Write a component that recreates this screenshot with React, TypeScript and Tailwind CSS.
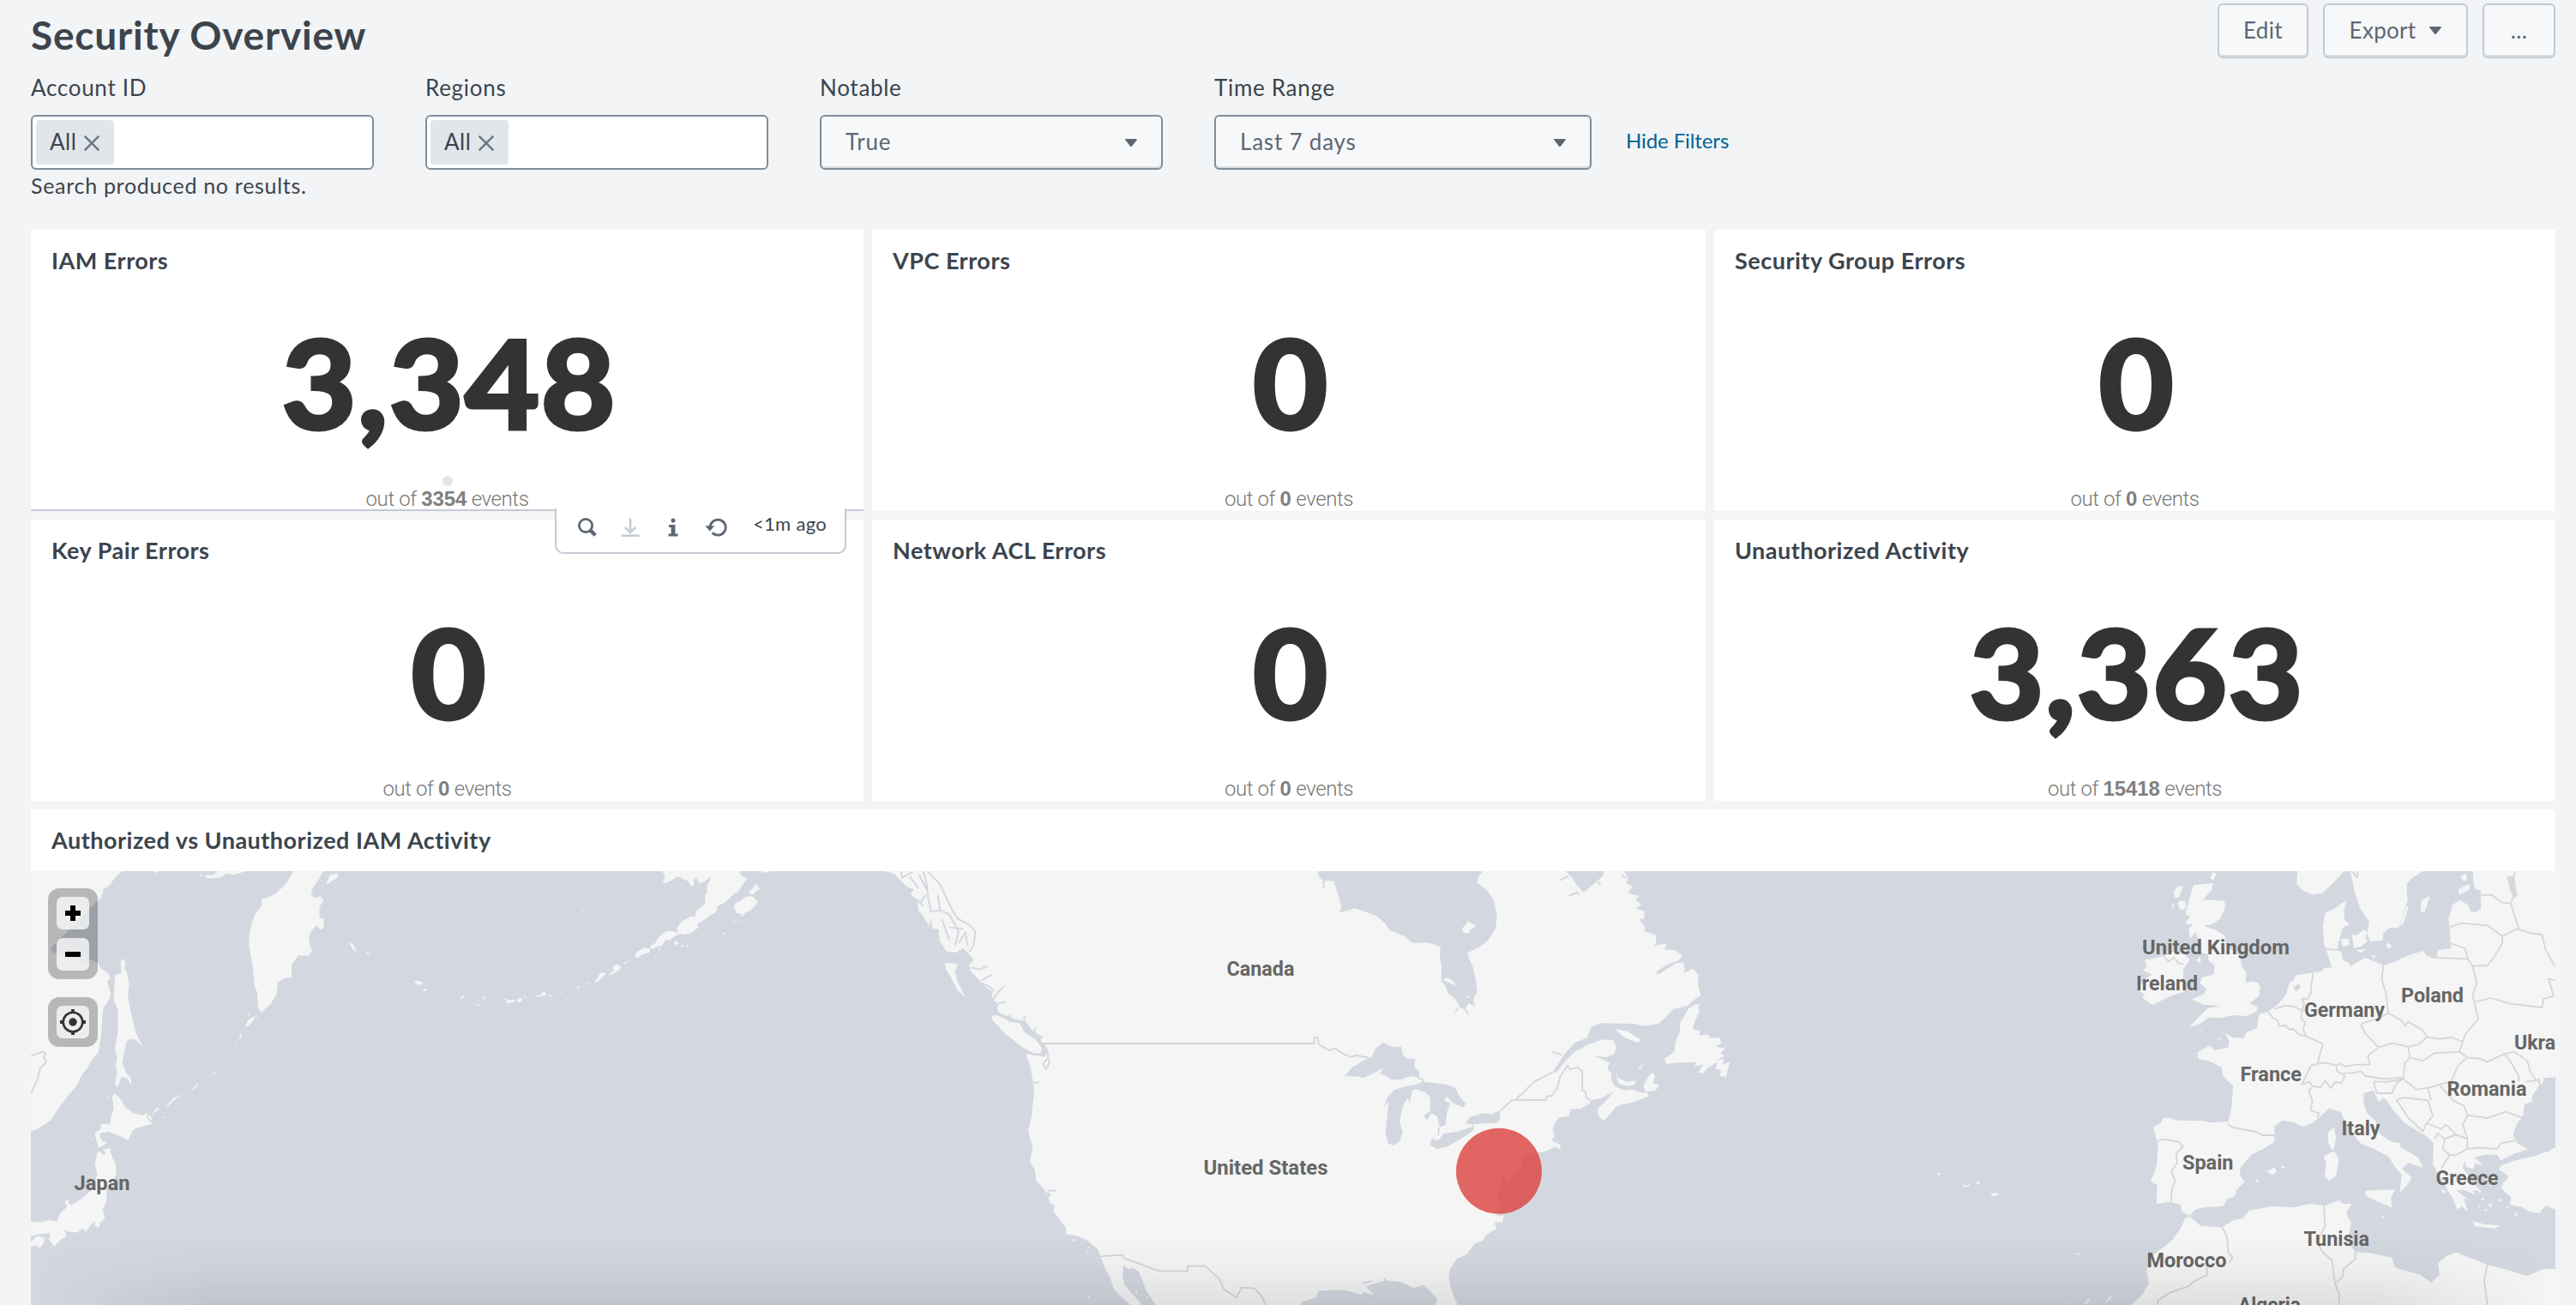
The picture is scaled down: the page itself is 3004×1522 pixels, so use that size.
import type { ReactNode } from "react";

const SEA = "#d3d8e0";
const LAND = "#f5f5f5";
const BORDER = "#d6d6d6";

function Caret() {
  return (
    <svg className="h-[9px] w-[14px] shrink-0" viewBox="0 0 14 9" fill="currentColor">
      <path d="M1 0H13Q14.5 0 13.5 1.5L8 8.4Q7 9.4 6 8.4L.5 1.5Q-.5 0 1 0Z" />
    </svg>
  );
}

function HeaderButton({ className, children }: { className: string; children: ReactNode }) {
  return (
    <button
      className={`flex h-16 items-center justify-center rounded-md border-2 border-[#c3cbd4] bg-[#f7f8fa] pb-0.5 text-[26px] tracking-[0.3px] text-[#5c6773] shadow-[inset_0_-2px_0_#dadee1] ${className}`}
    >
      {children}
    </button>
  );
}

function Field({ label, className, children }: { label: string; className: string; children: ReactNode }) {
  return (
    <div className={className}>
      <label className="block h-[50px] text-[26px] leading-9 tracking-[0.7px]">{label}</label>
      {children}
    </div>
  );
}

function MultiSelect() {
  return (
    <div className="flex h-16 items-center rounded-md border-2 border-[#818d99] bg-white p-1">
      <div className="flex h-[52px] w-[91px] items-center rounded bg-[#e1e6eb] pb-0.5 pl-4 text-[26px] tracking-[0.5px]">
        All
        <svg className="mt-1 ml-[9px] size-[18px]" viewBox="0 0 19 19" stroke="#6b7785" strokeWidth="2.6" strokeLinecap="round">
          <path d="M1.5 1.5L17.5 17.5M17.5 1.5L1.5 17.5" />
        </svg>
      </div>
    </div>
  );
}

function Select({ value }: { value: string }) {
  return (
    <div className="flex h-16 items-center justify-between rounded-md border-2 border-[#818d99] bg-[#f7f8fa] pr-7 pl-7 text-[26px] tracking-[0.8px] text-[#5c6773] shadow-[inset_0_-2px_0_#dadee1]">
      <span className="-mt-0.5">{value}</span>
      <Caret />
    </div>
  );
}

function Panel({ title, value, total, active }: { title: string; value: string; total: string; active?: boolean }) {
  return (
    <section className={`relative flex h-[328px] flex-col bg-white ${active ? "border-b-2 border-[#c3cbd4]" : ""}`}>
      <h3 className="h-[73px] pl-6 text-[27px] leading-[72px] font-bold tracking-[0.5px]">{title}</h3>
      <div className="mt-[34px] scale-x-[1.055] pl-[5px] text-center text-[141px] leading-[144px] font-bold tracking-[2px] text-[#333] [-webkit-text-stroke:5px_#333]">
        {value}
      </div>
      <p className="mt-[46px] text-center font-['Roboto',sans-serif] text-2xl leading-9 font-light tracking-[-0.4px] text-[#777]">
        out of <b className="font-['Liberation_Sans',sans-serif] font-bold tracking-[-0.1px] text-[#808080]">{total}</b> events
      </p>
      {active && (
        <>
          <span className="absolute top-[287px] left-1/2 size-3 -translate-x-1/2 rounded-full bg-[#e1e6eb]" />
          <PanelToolbar />
        </>
      )}
    </section>
  );
}

function PanelToolbar() {
  return (
    <div className="absolute top-[325px] right-5 z-10 flex h-[53px] w-[340px] rounded-b-[10px] border-2 border-t-0 border-[#c3cbd4] bg-white pl-[25px] text-[#5c6773]">
      <svg className="mt-[11px] size-[22px]" viewBox="0 0 22 22" fill="none" stroke="currentColor">
        <circle cx="9" cy="9" r="7.6" strokeWidth="2.8" />
        <path d="M14 14L20.3 20.3" strokeWidth="4.4" />
      </svg>
      <svg className="mt-[11px] ml-7 size-[22px] text-[#c3cbd4]" viewBox="0 0 22 22" fill="none" stroke="currentColor" strokeWidth="2.6">
        <path d="M11 .5V16M4.8 11L11 17L17.2 11M.5 20.7H21.5" />
      </svg>
      <svg className="mt-[11px] ml-[33px] h-[22px] w-3" viewBox="0 0 12 22" fill="currentColor">
        <circle cx="6" cy="3" r="2.5" />
        <path d="M1 8H8.4V18.6H11.5V21.6H.5V18.6H3.6V11H1Z" />
      </svg>
      <svg className="mt-[11px] ml-[31px] h-[22px] w-[26px]" viewBox="0 0 26 22" fill="none" stroke="currentColor">
        <path d="M6.2 11A9 9 0 1 1 8.7 17.3" strokeWidth="2.8" />
        <path d="M.3 9.3L11.3 9.3L5.8 15.6Z" fill="currentColor" stroke="none" />
      </svg>
      <span className="mt-1 ml-[30px] text-[22px] leading-7 whitespace-nowrap tracking-[0.3px] text-[#3c444d]">&lt;1m ago</span>
    </div>
  );
}

type Sheet = { id: string; transform: string; land: string; water?: string; islands?: string; channels?: string; borders?: string };

const SHEETS: Sheet[] = [
  {
    id: "north-west-pacific",
    transform: "translate(0 920) scale(.33333 .38393)",
    land:
      "M108 250L428 250L412 262L400 272L385 292L362 305L355 330L330 350L300 375L270 405L240 430L215 450L180 482L178 492L185 498L215 500L250 515L290 524L320 520L345 530L352 545L378 560L385 575L375 585L380 600L388 625L378 645L362 665L358 690L355 740L345 798L320 825L305 850L285 870L270 900L240 930L205 970L180 1005L150 1022L130 1035L108 1040Z" +
      "M430 515L440 530L436 545L445 560L452 595L447 630L458 680L475 740L502 787L475 762L455 760L443 768L435 800L427 830L440 860L458 880L460 900L445 880L425 875L410 907L402 895L410 860L404 840L410 820L402 790L412 740L413 670L397 640L403 565L425 560L422 525Z" +
      "M400 925L420 940L440 968L465 985L500 992L520 985L530 1000L532 1018L480 1030L465 1038L447 1068L420 1055L380 1042L350 1045L350 1058L360 1070L375 1076L345 1090L335 1060L332 1045L350 1035L355 1018L385 1020L388 1000L398 970L392 935Z" +
      "M350 1102L362 1112L370 1108L362 1095L385 1092L390 1115L405 1140L407 1165L395 1200L372 1215L373 1250L360 1280L367 1305L350 1318L345 1335L330 1325L335 1310L312 1330L300 1345L290 1335L270 1348L240 1345L225 1338L233 1358L212 1370L190 1390L172 1370L175 1350L140 1352L108 1358L108 1315L140 1317L175 1310L200 1315L210 1290L235 1270L226 1255L245 1245L238 1258L250 1265L300 1235L330 1210L340 1170L332 1140L340 1105Z" +
      "M108 1375L130 1358L158 1365L150 1385L138 1395L125 1387L108 1390Z" +
      "M1028 250L1130 250L1115 275L1095 300L1088 320L1100 332L1120 326L1132 338L1117 360L1118 392L1132 395L1133 422L1122 428L1108 415L1095 425L1080 450L1083 470L1092 490L1080 507L1045 505L1020 535L1020 575L1000 573L972 588L967 625L945 655L912 680L903 660L900 620L890 595L885 545L875 495L870 465L875 425L890 385L915 355L915 335L940 328L965 318L1000 290Z" +
      "M1140 292L1155 262L1180 255L1182 268L1165 278Z",
    islands:
      "M718 262L745 262L762 250L860 250L820 262L790 258L775 268L745 272L722 270ZM540 250H558L546 256ZM696 262L708 260L702 266ZM860 718L868 702L885 692L892 695L880 712L866 723ZM893 688L901 689L897 696ZM835 758L842 745L846 750L840 760ZM818 780L826 774L822 783ZM780 826L786 824L783 830ZM740 868L758 855L750 866ZM664 920L693 894L690 904L672 916ZM578 968L605 940L640 928L610 945L590 962ZM524 1004L545 970L560 970L540 984ZM565 998L576 993L572 1000ZM372 930L382 938L378 942ZM1220 465L1235 472L1248 495L1235 488ZM1278 492L1298 505L1285 502ZM1450 586L1465 583L1479 593L1461 595ZM1480 610L1490 608L1492 614ZM866 684L874 683L872 690ZM318 1064L324 1060L322 1068Z",
    borders: "M108 812L150 798L160 804L152 818L162 825L155 838L142 846L130 885L108 925M530 955C540 985 510 985 518 1000S540 1015 542 1022",
  },
  {
    id: "alaska",
    transform: "translate(450 1000) scale(.35714 .33333)",
    land:
      "M903 48L1155 48L1160 62L1180 75L1165 95L1150 120L1135 128L1110 155L1082 172L1080 190L1055 205L1035 222L1018 232L1020 245L1000 262L975 270L955 268L945 275L925 290L915 288L900 310L885 312L868 322L862 310L880 300L890 280L915 258L935 258L955 265L950 248L965 225L998 205L1010 208L1012 190L1042 162L1042 135L1050 120L1048 100L1060 75L1062 66L1040 85L1022 90L1015 72L1005 78L1005 100L998 102L985 82L970 75L955 66L940 75L915 90L903 88L912 70Z" +
      "M1140 160L1160 152L1168 140L1185 135L1200 138L1215 155L1205 170L1190 185L1175 192L1162 208L1158 195L1145 195L1137 175Z",
    islands:
      "M1183 125L1200 105L1208 92L1222 112L1210 118L1198 130ZM812 345L820 330L845 315L860 318L862 332L840 338L820 352ZM722 415L745 395L740 380L755 375L768 382L762 395L745 405ZM682 438L700 405L718 402L712 415L695 432ZM482 488L510 478L515 466L522 475L520 482L505 486ZM525 482H550L538 487ZM388 492L402 500L425 498L416 506L396 510ZM428 505L430 495L447 492L440 508ZM452 488L458 485L456 494ZM92 432L110 432L120 438L108 446ZM120 464L128 460L134 464L127 468ZM240 496L252 482L258 483L248 496ZM288 511L300 514L312 524ZM314 488L324 488L320 498ZM564 470L576 470L572 474ZM622 455L630 450L634 454L626 458ZM650 440L660 438L660 443ZM772 370L785 365L786 372ZM788 362L795 360L793 367ZM940 298L948 292L956 300L946 308ZM960 318L968 305L974 310ZM980 310L986 307L988 316ZM890 316L896 320L892 326ZM878 350L886 350L882 354ZM1134 230L1140 221L1143 225ZM1148 220L1154 220L1152 226ZM1102 266L1106 262L1110 267L1106 271ZM636 182L646 182L641 187ZM657 218L666 218L662 223ZM1225 48H1255L1238 54Z",
  },
  {
    id: "west-coast",
    transform: "translate(1000 1000) scale(.35714 .33333)",
    land:
      "M90 48L1410 48L1410 1566L975 1566L945 1520L930 1480L918 1450L900 1436L885 1440L868 1428L865 1460L872 1495L900 1530L930 1566L890 1566L838 1512L828 1480L808 1435L792 1395L785 1372L750 1340L720 1325L682 1318L680 1295L640 1238L645 1217L628 1208L622 1180L605 1155L582 1130L580 1095L563 1065L572 1015L557 955L568 910L577 820L570 765L562 720L553 700L552 682L575 692L600 694L610 700L622 680L612 660L600 650L598 625L570 605L545 572L500 562L458 540L455 505L440 500L440 470L410 445L385 415L370 400L365 375L380 360L370 345L345 318L320 333L290 328L268 290L265 252L245 248L240 210L234 240L215 205L200 188L195 150L173 128L185 112L160 102L135 75L120 58Z" +
      "M285 368L328 372L318 400L325 430L352 490L325 462L305 420L288 390Z" +
      "M437 555L455 552L500 573L530 580L545 612L580 637L602 665L598 685L575 685L540 665L510 640L480 615L460 590L440 568Z",
    channels:
      "M215 48L225 90L232 150L240 190M235 190L270 185L300 200L330 260L318 310M170 66L200 110M262 130L270 185M205 160L222 132M275 215L300 290M300 245L345 250M330 300L352 262L360 310M370 385L400 392L425 380M405 430L440 410M405 440L435 455L445 470M440 500L460 470L480 448M455 520L465 508L485 507M490 570L545 580L545 555M545 575L575 615L582 592M570 615L605 630M603 650L618 670L626 720L615 742L606 722L620 705M622 1185L624 1166L648 1166M622 1175L630 1186M574 788H592M455 545L500 562L495 550M200 60L225 110M190 145L215 170",
    islands: "M695 1340L712 1334L706 1342ZM750 1365L758 1363L756 1370ZM748 1382L752 1378L754 1386ZM750 1530L760 1538L756 1542ZM905 1515L912 1518L912 1532ZM945 1535L952 1540L946 1546Z",
    borders:
      "M228 48L268 92L310 185L328 215L365 235L385 260L378 310L365 330M600 651L1410 651M143 48L145 70L180 50M790 1396L865 1391L870 1402L985 1447L1078 1447L1078 1430L1135 1430L1182 1475L1195 1510L1237 1540L1255 1505L1295 1508L1320 1535L1333 1566M552 682Q580 695 610 690",
  },
  {
    id: "east-coast",
    transform: "translate(1500 1000) scale(.38265 .33333)",
    land:
      "M-5 48L98 48L97 62L105 74L115 82L145 82L155 120L168 170L162 192L185 186L210 178L235 188L275 205L300 230L315 255L360 275L385 300L420 298L450 302L470 315L468 355L474 380L472 430L485 450L495 478L515 495L530 525L545 532L556 510L575 522L570 495L582 470L578 430L568 380L550 335L590 312L615 290L638 248L642 200L632 150L612 115L582 90L585 70L598 48L852 48L870 70L885 95L905 123L935 95L965 65L968 48L1030 48L1042 75L1035 90L1055 102L1042 125L1075 135L1065 150L1082 165L1065 178L1092 190L1090 215L1075 215L1095 245L1090 258L1125 270L1128 300L1118 308L1160 302L1150 322L1185 325L1208 345L1195 360L1160 375L1128 400L1130 412L1190 370L1210 366L1215 395L1208 405L1240 390L1255 410L1256 450L1263 482L1240 500L1225 518L1180 530L1155 560L1135 582L1085 590L1065 582L960 580L930 592L917 630L880 648L850 685L815 745L812 754L825 750L850 712L880 680L920 655L965 637L995 640L1006 662L1000 688L975 700L938 694L985 718L978 740L992 755L990 775L1000 800L1030 815L1055 812L1075 822L1100 822L1105 835L1060 855L1015 868L1005 872L985 900L968 920L952 905L948 880L975 852L998 818L960 842L925 850L925 862L895 880L868 880L860 905L832 910L818 930L812 955L818 975L808 990L835 1005L835 1022L820 1012L790 1028L760 1035L720 1048L715 1080L690 1120L670 1170L660 1200L640 1255L662 1252L660 1275L635 1278L640 1300L610 1320L598 1342L575 1350L550 1388L520 1405L500 1440L495 1468L502 1510L522 1566L455 1566L460 1545L435 1512L418 1496L388 1506L350 1486L302 1480L270 1490L242 1500L268 1532L235 1520L228 1530L200 1520L170 1512L130 1515L100 1515L90 1540L50 1555L40 1566L-5 1566Z",
    water:
      "M178 766L200 735L240 708L262 695L270 670L295 648L320 662L350 662L355 690L365 703L393 705L390 730L405 750L405 772L380 765L345 778L318 778L305 765L285 755L298 735L265 755L235 772L215 766Z" +
      "M330 812L378 797L415 802L385 815L375 860L370 840L355 870L350 900L345 925L355 960L345 995L325 1008L310 1000L302 965L308 900L312 855L298 872L305 845Z" +
      "M380 800L415 785L480 793L515 805L530 840L547 860L540 875L510 862L490 838L480 850L500 860L490 890L485 935L468 945L460 905L440 895L430 918L418 905L440 885L438 840L425 822L400 812Z" +
      "M437 1005L445 978L450 990L466 988L480 965L520 960L570 942L565 960L525 990L490 1012L460 1020Z" +
      "M545 932L560 908L600 895L625 898L652 885L652 915L640 930L610 930L575 934Z" +
      "M720 1045L765 1030L780 1045L720 1090L700 1130L680 1160L670 1210L655 1260L645 1180L655 1130L662 1100L668 1140L690 1130L715 1080Z",
    islands:
      "M1267 512L1255 518L1258 540L1240 590L1240 603L1262 605L1258 622L1285 620L1292 632L1322 630L1325 650L1308 662L1338 668L1322 685L1335 695L1310 710L1335 705L1328 725L1352 715L1340 768L1322 765L1325 745L1308 740L1315 715L1285 735L1270 755L1255 752L1272 725L1245 730L1248 716L1200 718L1158 722L1153 705L1182 680L1188 640L1200 610L1200 580L1225 530L1245 515ZM1000 600L1040 608L1082 640L1070 648L1030 630ZM1115 752L1124 765L1118 788L1137 798L1125 815L1095 820L1088 800L1100 772ZM1005 752L1012 772L1040 785L1068 780L1060 795L1040 800L1012 790ZM475 428L492 420L515 440L515 448L500 440ZM535 250L550 232L552 222L565 232L578 238L568 250L560 252L558 265L540 264ZM1072 740L1085 722L1080 740ZM1130 900L1138 902L1134 906ZM548 488L556 484L558 492ZM988 1405L992 1407L990 1410ZM540 205L545 210L542 212Z",
    channels: "M700 845L720 825L755 785L812 752M840 690L808 680M114 82V108M1020 60L1035 72M860 135L888 122L892 130M958 98L950 85M834 80L860 65M525 525L515 540M545 532L555 550M232 1490L262 1482M302 1490L300 1472",
    borders:
      "M-5 651L85 651L85 630L95 630L100 655L130 675L150 668L170 685L195 698L215 693L250 700M652 886L688 849L790 849L795 835L808 835L825 808L835 765L858 728L865 742L888 734L902 748L902 815L912 822L915 842L925 848M402 772L415 776L420 795M465 945L463 972M568 935L570 955",
  },
  {
    id: "europe",
    transform: "translate(2400 1000) scale(.3852 .33333)",
    land:
      "M410 97L470 90L465 115L438 148L505 152L505 180L490 215L465 235L440 240L480 255L505 275L510 310L550 345L558 385L570 405L568 440L585 433L605 438L612 455L608 485L580 510L605 525L600 540L570 555L530 552L490 562L455 560L430 582L396 595L425 560L450 530L490 518L440 515L405 495L440 480L450 460L430 440L435 420L470 410L475 380L455 360L455 340L425 330L432 300L415 262L400 285L395 250L410 235L385 232L400 205L385 200L395 160L402 130Z" +
      "M322 345L350 330L385 340L398 360L380 390L378 430L380 470L340 485L285 517L255 490L262 480L240 460L265 425L285 410L258 395L270 380L262 360Z" +
      "M725 48L865 48L845 75L800 125L770 130L735 112L722 90Z" +
      "M885 48L1105 48L1075 70L1055 92L1058 150L1045 200L1032 245L1000 248L985 265L982 292L945 293L935 265L942 225L915 180L898 120Z" +
      "M872 150L865 190L868 220L882 235L862 245L855 275L848 300L845 325L858 330L862 360L880 368L885 380L930 350L955 362L985 378L1020 365L1055 345L1105 327L1118 345L1145 355L1150 325L1190 318L1187 270L1182 215L1195 165L1215 150L1240 165L1250 190L1265 192L1280 180L1280 115L1262 110L1258 90L1255 48L1506 48L1506 770L1470 775L1447 815L1435 835L1435 855L1412 865L1408 905L1390 930L1378 970L1390 1000L1425 1020L1385 1035L1340 1060L1330 1040L1290 1040L1260 1050L1288 1078L1262 1070L1258 1090L1235 1082L1232 1062L1225 1085L1240 1110L1255 1135L1275 1165L1255 1165L1265 1180L1225 1162L1205 1165L1245 1200L1228 1192L1240 1240L1222 1220L1208 1232L1195 1190L1180 1168L1170 1140L1155 1115L1135 1075L1137 1000L1115 975L1085 955L1050 930L1015 885L995 850L985 842L970 855L955 815L925 825L925 860L935 895L960 920L975 970L1010 995L1038 1000L1035 1012L1090 1050L1105 1085L1060 1068L1042 1090L1070 1120L1055 1150L1035 1172L1040 1110L1018 1080L1000 1045L955 1020L915 1000L890 962L868 920L855 890L820 878L795 905L770 930L740 942L715 928L680 920L655 940L655 995L620 1020L585 1040L552 1085L550 1110L565 1135L540 1165L535 1185L512 1195L500 1220L440 1225L415 1232L398 1253L375 1240L370 1215L335 1205L298 1212L300 1145L280 1135L300 1075L302 1000L288 945L310 930L318 912L340 912L360 920L440 922L460 928L515 925L525 880L530 800L500 765L495 735L455 710L425 705L422 682L460 658L475 675L515 665L518 645L506 615L530 630L562 632L570 612L602 598L608 550L635 540L665 515L690 480L700 440L712 430L722 412L765 405L800 398L805 388L828 385L818 345L805 300L802 240L808 195L835 180Z" +
      "M1340 1078L1372 1066L1385 1060L1445 1045L1506 1015L1506 1232L1475 1218L1458 1245L1430 1240L1400 1222L1368 1215L1372 1190L1340 1155L1365 1115L1335 1092Z" +
      "M222 1566L255 1530L275 1490L268 1445L290 1390L345 1340L370 1300L385 1262L400 1258L430 1288L495 1295L530 1270L560 1262L580 1235L650 1220L715 1225L760 1212L810 1218L850 1200L862 1212L888 1212L872 1245L888 1280L880 1320L875 1345L900 1380L950 1385L1010 1400L1020 1435L1095 1460L1130 1488L1155 1460L1150 1420L1175 1395L1208 1382L1245 1400L1300 1425L1350 1440L1420 1465L1470 1440L1506 1440L1506 1566Z",
    water: "M1358 68L1382 64L1378 100L1392 130L1382 142L1370 118ZM712 455L728 442L735 452L722 470ZM1450 775L1506 768L1506 800L1460 812Z" +
      "M1447 815L1475 775L1506 768L1506 1010L1480 1032L1425 1022L1390 1000L1378 970L1390 930L1408 905L1412 865L1435 855Z",
    islands:
      "M1460 770L1472 778L1460 800ZM350 125L358 105L380 98L365 140L354 140ZM362 155L385 152L388 178L370 185L365 172ZM344 170L350 160L350 185ZM460 72L468 52L480 56L470 80ZM420 360L430 345L432 370ZM890 270L905 272L925 252L935 262L930 285L940 290L920 310L895 318ZM855 285L880 285L882 305L862 312ZM900 325L930 320L920 334ZM1100 150L1125 136L1110 190L1097 190ZM1055 170L1062 172L1042 240L1036 235ZM1212 110L1245 92L1245 112L1215 132ZM1218 65L1235 58L1238 80L1225 82ZM996 298L1010 308L1002 320L994 310ZM950 338L962 345L955 358ZM835 942L842 985L832 1025L818 1000L816 965ZM804 1045L835 1028L850 1055L842 1115L820 1130L808 1115L812 1070ZM930 1168L945 1165L1020 1162L1008 1190L1010 1225L960 1200L932 1185ZM632 1098L655 1085L662 1098L648 1112ZM674 1080L688 1082L682 1090ZM598 1128L608 1128L602 1138ZM1256 1273L1290 1283L1338 1288L1322 1298L1260 1290ZM1380 1256L1390 1238L1390 1252ZM1160 1158L1175 1170L1165 1175ZM1280 1195L1292 1192L1286 1204ZM1300 1215L1315 1210L1312 1225ZM1330 1195L1345 1198L1338 1206ZM1272 1215L1280 1222L1272 1224ZM1310 1115L1330 1122L1318 1130ZM1345 1135L1355 1140L1348 1146ZM1255 1140L1282 1170L1275 1172ZM1355 1222L1366 1220L1360 1228ZM1290 1230L1300 1232L1294 1238ZM50 1386L66 1386L60 1392ZM30 1550L34 1554L32 1560ZM85 1548L100 1545L90 1555ZM145 1560L152 1542L166 1532L158 1545ZM80 1560L92 1548L98 1546L86 1562ZM978 1252L988 1258L982 1264ZM428 605H436L432 610ZM480 632H496L488 638Z",
    borders:
      "M320 345L335 365L350 350L365 370L378 372M812 320L858 326M890 48L905 70L908 48M772 405L765 460L768 470L755 495L738 495L745 512L740 535L735 560L748 580L742 600L750 625M655 530L690 518L715 522L738 535M635 540L650 560L665 570L670 590L688 588L700 602L712 600L730 620L750 625L802 652L785 722L765 730L750 765L738 795L762 785L770 800L795 805L808 780L825 808L840 785L858 790L868 765L845 748L842 728L812 718L785 722M770 805L758 815L770 850L765 885L790 895L785 910" +
      "M842 728L855 722L870 732L900 725L945 725L938 695L970 665L930 615L918 590L922 580L965 565L1000 545M862 755L890 755L918 748L930 765L990 775L1045 770M985 378L980 430L992 470L1000 545L1040 570L1050 590L1060 575L1105 605L1118 630M970 665L1010 650L1060 662L1090 655L1118 628L1150 635L1190 630L1225 645M1060 662L1065 700L1105 712L1140 685L1215 680L1232 620L1272 565L1255 480L1268 440L1255 380L1240 355L1130 350" +
      "M1065 700L1050 720L1045 775L1085 812L1125 805L1155 795L1190 785L1210 730L1238 700L1215 680M1238 700L1280 705L1300 715L1350 688L1380 680L1420 710L1430 750L1448 780L1415 785M1352 688L1370 715L1395 765L1395 785M1155 795L1195 850L1230 870L1240 902L1300 912L1355 890L1405 910M1240 902L1225 935L1240 985L1238 1020M1238 1020L1270 1015L1330 1020L1340 1000L1385 990M955 785L965 825L1010 825L1025 790L1045 775M955 785L1000 785L1045 775M1105 960L1060 910L1025 850L1045 840L1120 850L1135 905L1115 930L1105 960M1118 805L1130 850" +
      "M1115 930L1160 950L1175 935L1205 970L1170 985L1150 965L1140 985M1170 985L1165 1020L1185 1040L1205 1042L1238 1020L1240 985L1205 970M1185 1042L1160 1090M1265 505L1310 492L1370 512L1465 525L1470 495L1500 485L1485 425L1506 430M1255 380L1300 378L1320 350L1345 300L1345 275L1390 250L1430 265L1465 270L1475 320L1506 385M1185 245L1220 230L1300 238L1345 275M1187 300L1232 318L1240 355M1282 132L1310 130L1345 158L1370 160L1395 250M1370 160L1385 118L1378 70L1385 48" +
      "M512 932L530 945L600 960L620 972L655 972M302 992L320 986L365 995L378 1012L358 1035L360 1070L342 1100L355 1130L345 1160L342 1205M498 1295L512 1330L515 1380L528 1400L518 1418M450 1433L452 1460L410 1485L395 1500L340 1522L302 1550L302 1566M805 1218L808 1290L785 1345L800 1380L830 1410L838 1490L852 1530L850 1566M900 1375L900 1405L865 1440L860 1470L838 1490M1300 1425L1290 1480L1300 1566",
  },
];

const LABELS: [string, number, number, number][] = [
  ["Canada", 1430.5, 1137.5, 79],
  ["United States", 1403.5, 1369.5, 145],
  ["Japan", 86.5, 1387.5, 65],
  ["United Kingdom", 2498, 1112.5, 172],
  ["Ireland", 2491, 1155, 72],
  ["Germany", 2687, 1185.7, 94],
  ["Poland", 2800, 1168.5, 73],
  ["Ukra", 2932, 1224, 48],
  ["France", 2612.5, 1260.5, 71.5],
  ["Romania", 2853.5, 1277.5, 93],
  ["Italy", 2730.5, 1324, 45],
  ["Spain", 2545, 1364, 59.5],
  ["Greece", 2840.5, 1382, 73],
  ["Tunisia", 2686.5, 1452.5, 76.5],
  ["Morocco", 2503.5, 1477.5, 93],
  ["Algeria", 2610, 1530, 73],
];

function WorldMap() {
  return (
    <svg className="block h-[506px] w-full" viewBox="36 1016 2944 506" preserveAspectRatio="none">
      <defs>
        <linearGradient id="fade" x1="0" y1="0" x2="0" y2="1">
          <stop offset="0" stopColor="#000" stopOpacity="0" />
          <stop offset=".45" stopColor="#000" stopOpacity=".025" />
          <stop offset="1" stopColor="#000" stopOpacity=".085" />
        </linearGradient>
        <linearGradient id="sides" x1="0" y1="0" x2="1" y2="0">
          <stop offset="0" stopColor="#fff" stopOpacity="0" />
          <stop offset=".07" stopColor="#fff" />
          <stop offset=".93" stopColor="#fff" />
          <stop offset="1" stopColor="#fff" stopOpacity="0" />
        </linearGradient>
        <mask id="sideMask">
          <rect x="36" y="1440" width="2944" height="82" fill="url(#sides)" />
        </mask>
      </defs>
      <rect x="36" y="1016" width="2944" height="506" fill={SEA} />
      {SHEETS.map((s) => (
        <g key={s.id} transform={s.transform} fill="none" strokeLinejoin="round">
          <path d={s.land} fill={LAND} />
          {s.water && <path d={s.water} fill={SEA} />}
          {s.islands && <path d={s.islands} fill={LAND} />}
          {s.channels && <path d={s.channels} stroke={SEA} strokeWidth="2" vectorEffect="non-scaling-stroke" />}
          {s.borders && <path d={s.borders} stroke={BORDER} strokeWidth="1.8" vectorEffect="non-scaling-stroke" />}
        </g>
      ))}
      <g fill={LAND}>
        <ellipse cx="2261" cy="1369" rx="1.5" ry="1.5" />
        <path d="M2288 1380L2293 1383L2299 1380L2295 1384H2291Z" />
        <ellipse cx="2306.5" cy="1379.5" rx="2.5" ry="1.5" />
        <ellipse cx="2326" cy="1393" rx="4.5" ry="1.6" />
      </g>
      <g fill="#666" className="font-['Roboto',sans-serif] text-2xl font-bold">
        {LABELS.map(([name, x, y, w]) => (
          <text key={name} x={x} y={y} textLength={w} lengthAdjust="spacingAndGlyphs">
            {name}
          </text>
        ))}
      </g>
      <circle cx="1748" cy="1365.8" r="50" fill="#dc413d" fillOpacity=".8" />
      <rect x="36" y="1440" width="2944" height="82" fill="url(#fade)" mask="url(#sideMask)" />
    </svg>
  );
}

function MapControls() {
  return (
    <div className="absolute top-5 left-5 flex flex-col gap-[21px]">
      <div className="flex flex-col gap-[10px] rounded-[13px] bg-black/25 p-[10px]">
        <button className="flex h-[38px] w-[38px] items-center justify-center rounded-[7px] bg-white/75">
          <svg className="size-[18px]" viewBox="0 0 18 18">
            <path d="M6 0H12V6H18V12H12V18H6V12H0V6H6Z" />
          </svg>
        </button>
        <button className="flex h-[38px] w-[38px] items-center justify-center rounded-[7px] bg-white/75">
          <svg className="h-[6px] w-[18px]" viewBox="0 0 18 6">
            <path d="M0 0H18V6H0Z" />
          </svg>
        </button>
      </div>
      <div className="w-[58px] rounded-[13px] bg-black/25 p-[10px]">
        <button className="flex h-[38px] w-[38px] items-center justify-center rounded-[7px] bg-white/75">
          <svg className="size-[30px]" viewBox="0 0 30 30" fill="none" stroke="#333">
            <circle cx="15" cy="15" r="11.3" strokeWidth="2.6" />
            <circle cx="15" cy="15" r="4.7" fill="#333" stroke="none" />
            <path d="M15 0V5M15 25V30M0 15H5M25 15H30" strokeWidth="3.8" />
          </svg>
        </button>
      </div>
    </div>
  );
}

export default function App() {
  return (
    <div className="h-[1522px] w-[3004px] overflow-hidden bg-[#f2f4f5] pr-6 pl-9 font-['Lato',sans-serif] text-[#3c444d]">
      <header className="flex h-[84px] items-start justify-between">
        <h1 className="mt-[17px] text-[46px] leading-[48px] font-bold tracking-[0.8px]">Security Overview</h1>
        <div className="mt-1 flex">
          <HeaderButton className="w-[106px]">Edit</HeaderButton>
          <HeaderButton className="ml-[17px] w-[169px] gap-4">
            Export
            <Caret />
          </HeaderButton>
          <HeaderButton className="ml-[17px] w-[85px]">...</HeaderButton>
        </div>
      </header>

      <div className="flex h-[184px] items-start gap-[60px]">
        <Field label="Account ID" className="w-[400px]">
          <MultiSelect />
          <p className="text-[25px] leading-9 tracking-[0.7px]">Search produced no results.</p>
        </Field>
        <Field label="Regions" className="w-[400px]">
          <MultiSelect />
        </Field>
        <Field label="Notable" className="w-[400px]">
          <Select value="True" />
        </Field>
        <Field label="Time Range" className="w-[440px]">
          <Select value="Last 7 days" />
        </Field>
        <a className="mt-[62px] -ml-5 text-2xl leading-9 tracking-[-0.1px] text-[#006297]">Hide Filters</a>
      </div>

      <main className="flex flex-col gap-[10px]">
        <div className="grid grid-cols-[971px_972px_981px] gap-[10px]">
          <Panel title="IAM Errors" value="3,348" total="3354" active />
          <Panel title="VPC Errors" value="0" total="0" />
          <Panel title="Security Group Errors" value="0" total="0" />
          <Panel title="Key Pair Errors" value="0" total="0" />
          <Panel title="Network ACL Errors" value="0" total="0" />
          <Panel title="Unauthorized Activity" value="3,363" total="15418" />
        </div>
        <section className="bg-white">
          <h3 className="h-[72px] pl-6 text-[27px] leading-[72px] font-bold tracking-[0.5px]">Authorized vs Unauthorized IAM Activity</h3>
          <div className="relative h-[506px]">
            <WorldMap />
            <MapControls />
          </div>
        </section>
      </main>
    </div>
  );
}
